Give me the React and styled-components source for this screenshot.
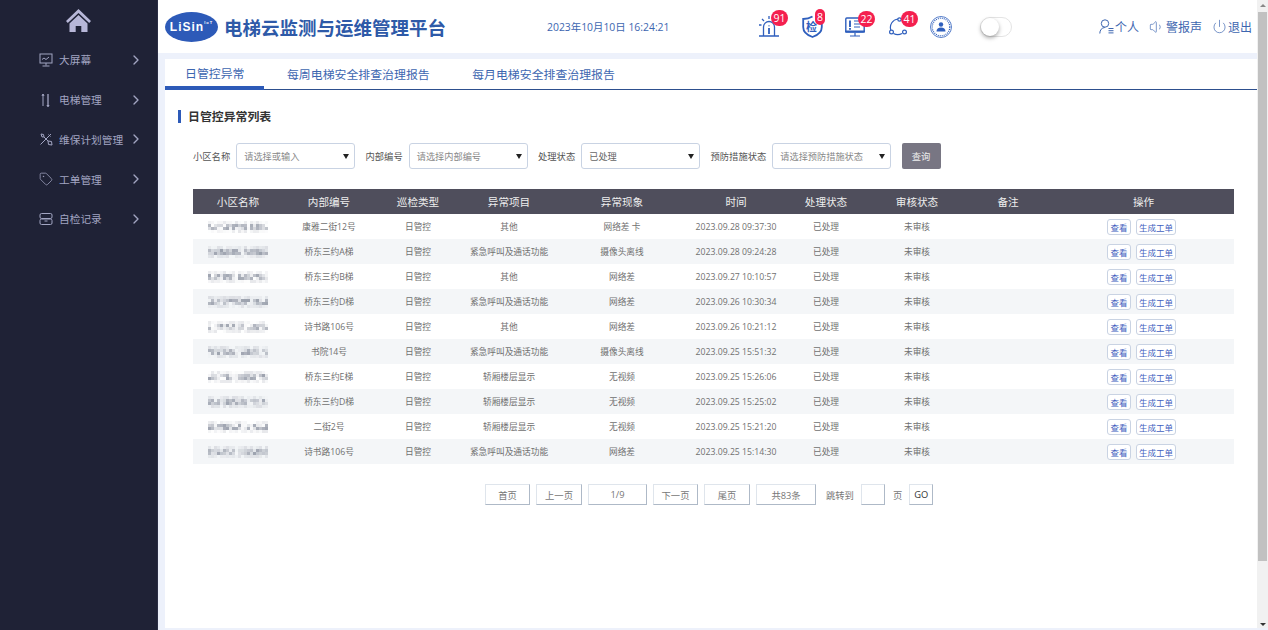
import styled, { createGlobalStyle } from 'styled-components';
import { ChevronRight, Power, Tag, Volume1 } from 'lucide-react';

const FONT = '"Open Sans", "Noto Sans CJK SC", "Noto Sans", sans-serif';
const COLUMNS = '90px 92px 86px 96px 130px 98px 82px 100px 82px 1fr';

const GlobalStyle = createGlobalStyle`
	html, body {
		margin: 0;
		height: 100%;
		overflow: hidden;
		font-family: ${FONT};
	}
	* {
		box-sizing: border-box;
	}
`;

const menu = [
	{ name: '大屏幕', icon: 'screen' },
	{ name: '电梯管理', icon: 'lift' },
	{ name: '维保计划管理', icon: 'tools' },
	{ name: '工单管理', icon: 'tag' },
	{ name: '自检记录', icon: 'box' },
];

const alerts = [
	{ icon: 'alarm', count: 91, width: 20, margin: 0, badgeRight: -9, badgeWidth: 17 },
	{ icon: 'shield', count: 8, width: 21, margin: 23, badgeRight: -2, badgeWidth: 10 },
	{ icon: 'monitor', count: 22, width: 20, margin: 22, badgeRight: -10, badgeWidth: 17 },
	{ icon: 'cycle', count: 41, width: 19, margin: 24, badgeRight: -10, badgeWidth: 17 },
];

const rows = [
	['康雅二街12号', '其他', '网络差 卡', '2023.09.28 09:37:30'],
	['桥东三约A梯', '紧急呼叫及通话功能', '摄像头离线', '2023.09.28 09:24:28'],
	['桥东三约B梯', '其他', '网络差', '2023.09.27 10:10:57'],
	['桥东三约D梯', '紧急呼叫及通话功能', '网络差', '2023.09.26 10:30:34'],
	['诗书路106号', '其他', '网络差', '2023.09.26 10:21:12'],
	['书院14号', '紧急呼叫及通话功能', '摄像头离线', '2023.09.25 15:51:32'],
	['桥东三约E梯', '轿厢楼层显示', '无视频', '2023.09.25 15:26:06'],
	['桥东三约D梯', '轿厢楼层显示', '无视频', '2023.09.25 15:25:02'],
	['二街2号', '轿厢楼层显示', '无视频', '2023.09.25 15:21:20'],
	['诗书路106号', '紧急呼叫及通话功能', '网络差', '2023.09.25 15:14:30'],
];

const heads = ['小区名称', '内部编号', '巡检类型', '异常项目', '异常现象', '时间', '处理状态', '审核状态', '备注', '操作'];

const filters = [
	{ label: '小区名称', value: '请选择或输入' },
	{ label: '内部编号', value: '请选择内部编号' },
	{ label: '处理状态', value: '已处理', filled: true },
	{ label: '预防措施状态', value: '请选择预防措施状态' },
];

const MenuIcon = ({ type }) => {
	if (type === 'tag') {
		return <Tag size={14} strokeWidth={1.3} />;
	}
	return (
		<svg width="14" height="14" viewBox="0 0 14 14" fill="none" stroke="currentColor" strokeWidth="1">
			{type === 'screen' && (
				<>
					<rect x="1" y="1" width="12" height="9" />
					<path d="M3 6.5l2-1.5 2 1.5 3-2.5M7 10v2.5M3.5 13h7" />
				</>
			)}
			{type === 'lift' && (
				<>
					<path d="M4 1v12M3 3l1-2 1 2" />
					<path d="M9 1v12M10 12l-1 1.5L8 12" strokeWidth="1.3" />
				</>
			)}
			{type === 'tools' && (
				<>
					<path d="M1.5 12.5L12 2M9.5 2.5l2 2" />
					<path d="M2 2l2.5.5.5 2.3L3 5zM5 5l4 4M9 9l3.5.5L13 13l-3.5-.5z" />
				</>
			)}
			{type === 'box' && (
				<>
					<rect x="1" y="1.5" width="12" height="5" rx="1.5" />
					<rect x="1" y="7" width="12" height="5.5" rx="1.5" />
					<path d="M5.5 9h3" />
				</>
			)}
		</svg>
	);
};

const HeaderIcon = ({ type }) => {
	const blue = '#2f5fbd';
	if (type === 'alarm') {
		return (
			<svg width="20" height="21" viewBox="0 0 20 21" fill="none" stroke={blue} strokeWidth="1.3">
				<path d="M0 20h20M4.500 20V11a5.500 5.500 0 0 1 11 0v9" />
				<path d="M10 9.500v.8M10 12v6" strokeWidth="1.8" />
				<path d="M10 0v3M3 3l2 2M0 9h2.500" />
			</svg>
		);
	}
	if (type === 'shield') {
		return (
			<svg width="21" height="23" viewBox="0 0 21 23" fill="none" stroke={blue} strokeWidth="1.8">
				<path d="M10.500 1.500C8 3 4 4 1.200 4v8c0 5 4.800 8.500 9.300 10 4.500-1.500 9.300-5 9.300-10V4" />
			</svg>
		);
	}
	if (type === 'monitor') {
		return (
			<svg width="20" height="20" viewBox="0 0 20 20" fill="none" stroke={blue} strokeWidth="1.4">
				<rect x="0.800" y="1" width="18.400" height="14" rx="1" />
				<path d="M0 14.500h20" strokeWidth="2" />
				<path d="M5 3.500v6.500M5 11v1.800" strokeWidth="1.900" />
				<path d="M9 4h6M9 7h6M9 10h6M10 16v2.500M5 19h10" strokeWidth="1.200" />
			</svg>
		);
	}
	if (type === 'cycle') {
		return (
			<svg width="19" height="19" viewBox="0 0 19 19" fill="none" stroke={blue} strokeWidth="1.2">
				<path d="M1.800 13A8.500 8.500 0 0 1 9 2M4.500 16.500a8.500 8.500 0 0 0 8.500 0" />
				<circle cx="2.500" cy="15" r="1.900" />
				<circle cx="15.500" cy="15" r="1.900" />
				<circle cx="10.500" cy="2.500" r="1.700" />
			</svg>
		);
	}
	return (
		<svg width="22" height="22" viewBox="0 0 22 22" fill="none" stroke={blue}>
			<circle cx="11" cy="11" r="10.500" strokeWidth="0.8" />
			<circle cx="11" cy="11" r="8.800" strokeWidth="1.200" strokeDasharray="1 1" />
			<circle cx="11" cy="8.500" r="2.200" fill={blue} stroke="none" />
			<path d="M6.500 15.500c0-2.800 1.800-4 4.500-4s4.500 1.200 4.500 4z" fill={blue} stroke="none" />
		</svg>
	);
};

// the names are pixelated in the screenshot, so they stay a mosaic
const Mosaic = ({ seed }) => {
	const cells = [];
	const gap = 8 + (seed * 5) % 7;
	for (let x = 0; x < 20; x++) {
		for (let y = 0; y < 4; y++) {
			const n = Math.abs(Math.sin((x + 1) * 12.9898 + (y + 1) * 78.233 + seed * 37.719) * 43758.5453) % 1;
			const weight = y === 0 || y === 3 ? 0.2 : 0.75;
			const opacity = x === gap ? n * 0.1 : n * weight;
			cells.push(<rect key={`${x}-${y}`} x={x * 3} y={y * 3} width="3" height="3" fill="#7d8494" opacity={opacity} />);
		}
	}
	return (
		<MosaicImage width="60" height="12" viewBox="0 0 60 12">
			{cells}
		</MosaicImage>
	);
};

const App = () => {
	return (
		<Page>
			<GlobalStyle />
			<Sidebar>
				<HomeLink>
					<svg width="25" height="24" viewBox="0 0 25 24" fill="#b7b7d8">
						<path d="M12.500 1L0 13l1.800 2L12.500 5 23.200 15l1.800-2z" />
						<path d="M3.500 15.500L12.500 7l9 8.500V24h-6.200v-6h-5.600v6H3.500z" />
					</svg>
				</HomeLink>
				{menu.map(item => (
					<MenuItem key={item.name}>
						<MenuGlyph>
							<MenuIcon type={item.icon} />
						</MenuGlyph>
						<MenuText>{item.name}</MenuText>
						<ChevronRight size={16} strokeWidth={2} />
					</MenuItem>
				))}
			</Sidebar>
			<Workspace>
				<Main>
					<TopBar>
						<Logo>
							<LogoText>
								LiSin<sup>IoT</sup>
							</LogoText>
						</Logo>
						<Title>电梯云监测与运维管理平台</Title>
						<DateText>2023年10月10日 16:24:21</DateText>
						<Alerts>
							{alerts.map(a => (
								<AlertIcon key={a.icon} $width={a.width} $margin={a.margin}>
									<HeaderIcon type={a.icon} />
									{a.icon === 'shield' && <ShieldWord>检</ShieldWord>}
									<Badge $right={a.badgeRight} $width={a.badgeWidth}>
										{a.count}
									</Badge>
								</AlertIcon>
							))}
							<AlertIcon $width={22} $margin={22}>
								<HeaderIcon type="seal" />
							</AlertIcon>
						</Alerts>
						<Toggle>
							<ToggleKnob />
						</Toggle>
						<UserActions>
							<UserAction>
								<svg width="15" height="15" viewBox="0 0 15 15" fill="none" stroke="currentColor" strokeWidth="1">
									<circle cx="6" cy="4.500" r="3.700" />
									<path d="M.8 14.500c0-3.500 2-5.800 5-6M9.500 9.500h5M9.500 11.700h5M9.500 13.900h5" />
								</svg>
								个人
							</UserAction>
							<UserAction>
								<Volume1 size={16} strokeWidth={1} />
								警报声
							</UserAction>
							<UserAction>
								<Power size={15} strokeWidth={1.1} />
								退出
							</UserAction>
						</UserActions>
					</TopBar>
					<Content>
						<Card>
							<TabBar>
								<TabItem $active>日管控异常</TabItem>
								<TabItem>每周电梯安全排查治理报告</TabItem>
								<TabItem>每月电梯安全排查治理报告</TabItem>
							</TabBar>
							<SectionTitle>日管控异常列表</SectionTitle>
							<FilterRow>
								{filters.map(f => (
									<FilterField key={f.label}>
										<FilterLabel>{f.label}</FilterLabel>
										<SelectBox $filled={f.filled}>
											{f.value}
											<Caret />
										</SelectBox>
									</FilterField>
								))}
								<QueryButton>查询</QueryButton>
							</FilterRow>
							<Table>
								<HeadRow>
									{heads.map(h => (
										<HeadCell key={h} $shift={h === '操作'}>
											{h}
										</HeadCell>
									))}
								</HeadRow>
								{rows.map((r, i) => (
									<BodyRow key={r[3]} $alt={i % 2 === 1}>
										<Cell>
											<Mosaic seed={i + 1} />
										</Cell>
										<Cell>{r[0]}</Cell>
										<Cell>日管控</Cell>
										<Cell>{r[1]}</Cell>
										<Cell>{r[2]}</Cell>
										<Cell>{r[3]}</Cell>
										<Cell>已处理</Cell>
										<Cell>未审核</Cell>
										<Cell />
										<Cell>
											<RowButton $width={24}>查看</RowButton>
											<RowButton $width={40}>生成工单</RowButton>
										</Cell>
									</BodyRow>
								))}
							</Table>
							<Pager>
								<PageButton $width={45}>首页</PageButton>
								<PageButton $width={46}>上一页</PageButton>
								<PageButton $width={59}>1/9</PageButton>
								<PageButton $width={45}>下一页</PageButton>
								<PageButton $width={46}>尾页</PageButton>
								<PageButton $width={60}>共83条</PageButton>
								<PagerText $left={4}>跳转到</PagerText>
								<PageInput />
								<PagerText $left={2}>页</PagerText>
								<PageButton $width={24} $dark>
									GO
								</PageButton>
							</Pager>
						</Card>
					</Content>
				</Main>
				<ScrollTrack>
					<ScrollArrow />
					<ScrollThumb />
					<ScrollArrow $down />
				</ScrollTrack>
			</Workspace>
		</Page>
	);
};

export default App;

const Page = styled.div`
	display: flex;
	width: 100%;
	height: 100vh;
	background: #fff;
`;

const Sidebar = styled.aside`
	flex: 0 0 158px;
	background: #1f2236;
	border-right: 1px solid #2b2e45;
`;

const HomeLink = styled.div`
	display: flex;
	justify-content: center;
	height: 40px;
	padding-top: 8px;
`;

const MenuItem = styled.div`
	display: flex;
	align-items: center;
	height: 39.75px;
	padding-left: 39px;
	color: #a2a5c2;
`;

const MenuGlyph = styled.span`
	display: flex;
	width: 20px;
`;

const MenuText = styled.span`
	width: 69px;
	font-size: 10.7px;
	white-space: nowrap;
`;

const Workspace = styled.div`
	flex: 1;
	display: flex;
	min-width: 0;
	border-bottom: 2px solid #edf1fb;
`;

const Main = styled.div`
	flex: 1;
	display: flex;
	flex-direction: column;
	min-width: 0;
`;

const TopBar = styled.header`
	display: flex;
	align-items: center;
	height: 53px;
	padding-left: 7px;
	background: #fff;
`;

const Logo = styled.div`
	display: flex;
	align-items: center;
	justify-content: center;
	width: 53px;
	height: 30px;
	border-radius: 50%;
	background: #2d5ab8;
`;

const LogoText = styled.span`
	color: #fff;
	font-family: 'Liberation Sans', sans-serif;
	font-size: 12px;
	font-weight: 700;
	letter-spacing: 1px;

	sup {
		font-size: 4px;
		vertical-align: 7px;
		line-height: 0;
	}
`;

const Title = styled.h1`
	width: 222px;
	margin: 0 0 0 6px;
	color: #2e5aa8;
	font-size: 18.5px;
	font-weight: 700;
	white-space: nowrap;
`;

const DateText = styled.span`
	width: 212px;
	margin-left: 101px;
	color: #3d66b0;
	font-size: 10.4px;
	white-space: nowrap;
`;

const Alerts = styled.div`
	display: flex;
	align-items: center;
`;

const AlertIcon = styled.div`
	position: relative;
	display: flex;
	width: ${p => p.$width}px;
	margin-left: ${p => p.$margin}px;
`;

const ShieldWord = styled.span`
	position: absolute;
	top: 3px;
	left: 4px;
	color: #2f5fbd;
	font-size: 11px;
	font-weight: 700;
`;

const Badge = styled.span`
	position: absolute;
	top: -6px;
	right: ${p => p.$right}px;
	display: flex;
	align-items: center;
	justify-content: center;
	width: ${p => p.$width}px;
	height: 16px;
	border-radius: 8px;
	background: #f4204f;
	color: #fff;
	font-size: 10.5px;
`;

const Toggle = styled.div`
	display: flex;
	align-items: center;
	width: 32px;
	height: 20px;
	margin-left: 28px;
	border: 1px solid #e4e4e4;
	border-radius: 10px;
	background: #fff;
`;

const ToggleKnob = styled.span`
	width: 18px;
	height: 18px;
	border-radius: 50%;
	background: #fff;
	box-shadow: 0 2px 4px rgba(0, 0, 0, 0.35);
`;

const UserActions = styled.div`
	display: flex;
	align-items: center;
	gap: 10px;
	margin-left: 87px;
`;

const UserAction = styled.span`
	display: flex;
	align-items: center;
	gap: 1px;
	color: #3d66b0;
	font-size: 12px;
	white-space: nowrap;
`;

const Content = styled.div`
	flex: 1;
	display: flex;
	padding: 6px 0 0 7px;
	background: #edf1fb;
`;

const Card = styled.main`
	flex: 1;
	background: #fff;
`;

const TabBar = styled.nav`
	display: flex;
	gap: 2.5px;
	height: 31px;
	border-bottom: 1px solid #2d4f8e;
`;

const TabItem = styled.a`
	display: flex;
	align-items: center;
	height: ${p => (p.$active ? '31px' : '30px')};
	padding: 0 20px 1px;
	border-bottom: ${p => (p.$active ? '4px solid #2d5ab8' : 'none')};
	color: #3d66b0;
	font-size: 11.9px;
	white-space: nowrap;
`;

const SectionTitle = styled.h2`
	height: 13px;
	margin: 20px 0 0 13px;
	padding-left: 7px;
	border-left: 3px solid #2d5ab8;
	color: #333;
	font-size: 11.900px;
	font-weight: 700;
	line-height: 13px;
`;

const FilterRow = styled.div`
	display: flex;
	gap: 10.3px;
	height: 26px;
	margin: 20px 0 0 28px;
`;

const FilterField = styled.div`
	display: flex;
	align-items: center;
	gap: 6px;
`;

const FilterLabel = styled.label`
	color: #555;
	font-size: 9.300px;
	white-space: nowrap;
`;

const SelectBox = styled.div`
	position: relative;
	display: flex;
	align-items: center;
	width: 119px;
	height: 26px;
	padding-left: 7px;
	border: 1px solid #c9d3e3;
	border-radius: 3px;
	color: ${p => (p.$filled ? '#666' : '#888')};
	font-size: 9.200px;
	white-space: nowrap;
`;

const Caret = styled.span`
	position: absolute;
	top: 10px;
	right: 5px;
	border-top: 5px solid #222;
	border-left: 3.500px solid transparent;
	border-right: 3.500px solid transparent;
`;

const QueryButton = styled.button`
	width: 39px;
	height: 26px;
	padding: 0;
	border: 0;
	border-radius: 2px;
	background: #787683;
	color: #eee;
	font-family: inherit;
	font-size: 9.300px;
`;

const Table = styled.div`
	width: 1041px;
	margin: 20px 0 0 28px;
`;

const HeadRow = styled.div`
	display: grid;
	grid-template-columns: ${COLUMNS};
	height: 25px;
	background: #4f4e5c;
`;

const HeadCell = styled.div`
	display: flex;
	align-items: center;
	justify-content: center;
	padding-left: ${p => (p.$shift ? '4px' : '0')};
	color: #eee;
	font-size: 10.600px;
`;

const BodyRow = styled.div`
	display: grid;
	grid-template-columns: ${COLUMNS};
	height: 25px;
	background: ${p => (p.$alt ? '#f4f6f8' : '#fff')};
`;

const Cell = styled.div`
	display: flex;
	align-items: center;
	justify-content: center;
	gap: 5px;
	color: #707070;
	font-size: 8.700px;
	white-space: nowrap;
`;

const MosaicImage = styled.svg`
	filter: blur(0.5px);
`;

const RowButton = styled.button`
	width: ${p => p.$width}px;
	height: 16px;
	padding: 0;
	border: 1px solid #c9d3e3;
	border-radius: 3px;
	background: #fff;
	color: #3f5fc0;
	font-family: inherit;
	font-size: 8.500px;
	white-space: nowrap;
`;

const Pager = styled.div`
	display: flex;
	align-items: center;
	gap: 6px;
	height: 21px;
	margin: 20px 0 0 320px;
`;

const PageButton = styled.button`
	width: ${p => p.$width}px;
	height: 21px;
	padding: 0;
	border: 1px solid;
	border-color: #dfe5ec #aeb9c7 #aeb9c7 #dfe5ec;
	background: #fff;
	color: ${p => (p.$dark ? '#333' : '#777')};
	font-family: inherit;
	font-size: 9.300px;
`;

const PagerText = styled.span`
	margin: 0 1px 0 ${p => p.$left}px;
	color: #777;
	font-size: 9.300px;
	white-space: nowrap;
`;

const PageInput = styled.div`
	width: 24px;
	height: 21px;
	border: 1px solid #aeb9c7;
	border-top-color: #dfe5ec;
	border-left-color: #dfe5ec;
`;

const ScrollTrack = styled.div`
	flex: 0 0 11px;
	display: flex;
	flex-direction: column;
	background: #f1f1f1;
`;

const ScrollArrow = styled.span`
	flex: 0 0 3px;
	width: 6px;
	margin: ${p => (p.$down ? 'auto 2.500px 2px' : '4px 2.500px 5px')};
	border-left: 3px solid transparent;
	border-right: 3px solid transparent;
	border-bottom: ${p => (p.$down ? 'none' : '3px solid #888')};
	border-top: ${p => (p.$down ? '3px solid #333' : 'none')};
`;

const ScrollThumb = styled.div`
	height: 549px;
	margin: 0 1px;
	background: #c1c1c1;
`;
